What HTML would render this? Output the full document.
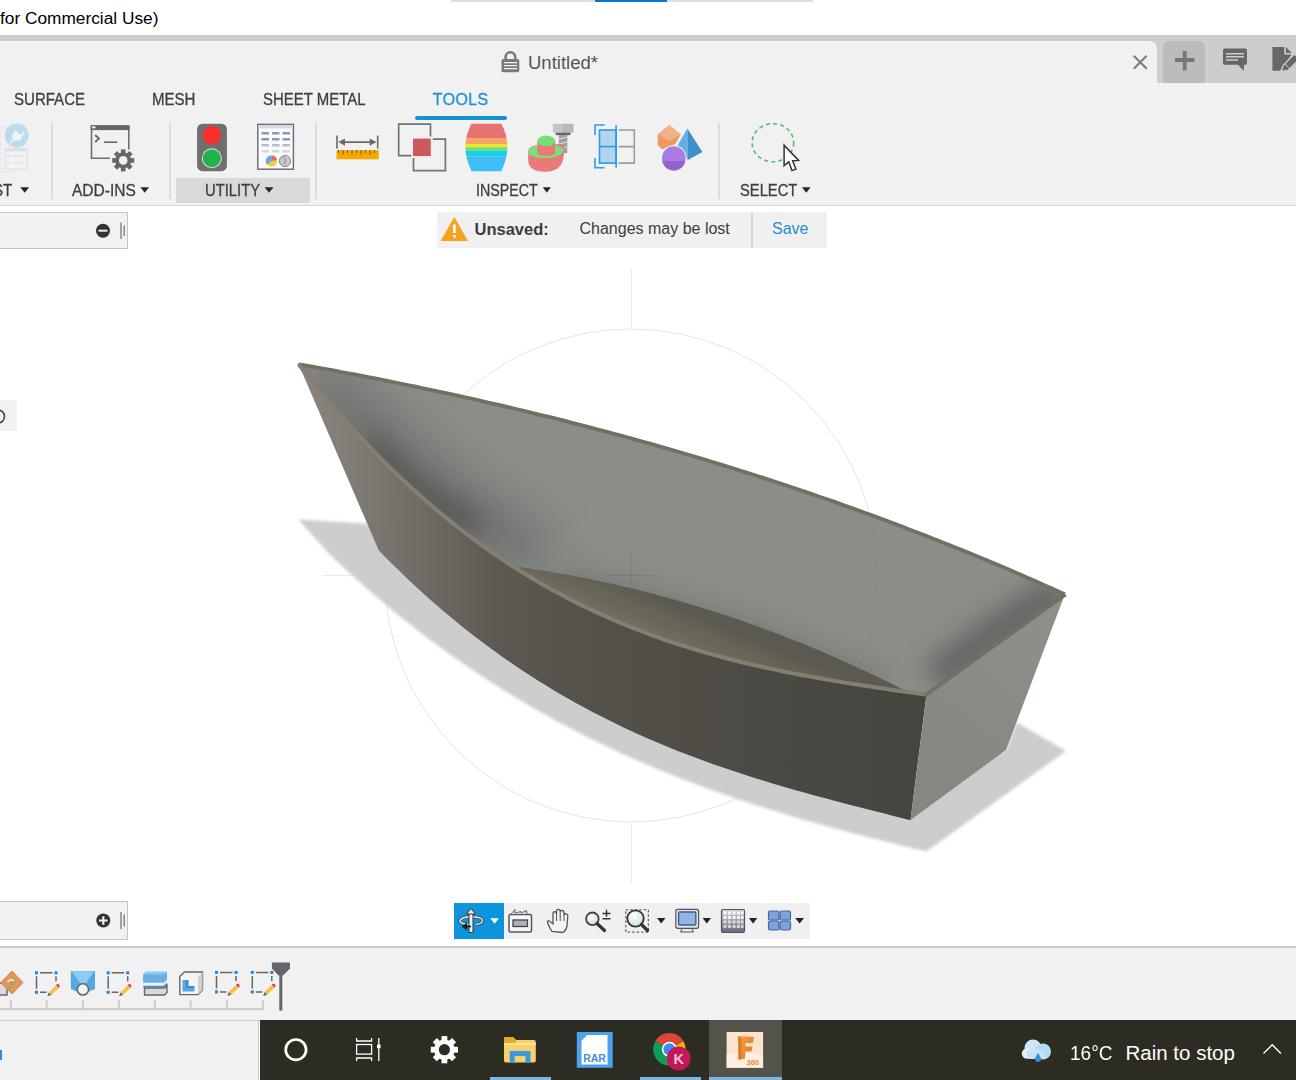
<!DOCTYPE html>
<html><head><meta charset="utf-8">
<style>
*{margin:0;padding:0;box-sizing:border-box}
html,body{width:1296px;height:1080px;overflow:hidden;background:#fff;font-family:"Liberation Sans",sans-serif}
body{position:relative}
.a{position:absolute}
.t{white-space:nowrap;line-height:1}
.tab{font-size:16px;color:#3f3f3f;transform-origin:0 0;-webkit-text-stroke:0.3px currentColor}
.grp{font-size:16px;color:#3f3f3f;transform-origin:0 0;-webkit-text-stroke:0.3px currentColor}
.sep{position:absolute;width:2px;background:#dcdcdc;top:123px;height:76px}
.tri{display:inline-block;width:0;height:0;border-left:4.5px solid transparent;border-right:4.5px solid transparent;border-top:5.5px solid #222;vertical-align:middle;margin-left:5px;position:relative;top:-3px}
</style></head><body>
<!-- top white bar -->
<div class="a" style="left:451px;top:0;width:362px;height:2px;background:#dedede"></div>
<div class="a" style="left:595px;top:0;width:72px;height:2px;background:#0a74d2"></div>
<div class="a t" style="left:0;top:10.1px;font-size:17.3px;color:#000">for Commercial Use)</div>

<!-- tab bar -->
<div class="a" style="left:0;top:35px;width:1296px;height:48px;background:#cdcdcd"></div>
<div class="a" style="left:-10px;top:41px;width:1167px;height:50px;background:#f1f1f1;border-top-right-radius:7px"></div>
<div class="a" style="left:1163px;top:41px;width:42px;height:42px;background:#bcbcbc;border-top-left-radius:6px;border-top-right-radius:6px"></div>
<div class="a" style="left:0;top:83px;width:1296px;height:122px;background:#f1f1f1"></div>
<div class="a" style="left:0;top:205px;width:1296px;height:1px;background:#d6d6d6"></div>


<!-- bottom bg -->
<div class="a" style="left:0;top:946px;width:1296px;height:2px;background:#c9c9c9"></div>
<div class="a" style="left:0;top:948px;width:1296px;height:72px;background:#f1f1f1"></div>
<div class="a" style="left:0;top:1020px;width:1296px;height:1px;background:#cfcfcf"></div>
<div class="a" style="left:0;top:1021px;width:259px;height:59px;background:#f1f1f1;border-right:1px solid #c9c9c9"></div>
<div class="a" style="left:260px;top:1020px;width:1036px;height:60px;background:#2d2c23"></div>
<!-- ribbon text -->
<div class="a t tab" style="left:14px;top:91.7px;transform:scaleX(0.94)">SURFACE</div>
<div class="a t tab" style="left:151.8px;top:91.7px;transform:scaleX(0.94)">MESH</div>
<div class="a t tab" style="left:262.8px;top:91.7px;transform:scaleX(0.935)">SHEET METAL</div>
<div class="a t tab" style="left:432.5px;top:91.7px;color:#1993d6;letter-spacing:0.4px">TOOLS</div>
<div class="a" style="left:415px;top:115.5px;width:92px;height:4px;border-radius:2px;background:#1193d6"></div>
<div class="a" style="left:176px;top:178px;width:134px;height:25px;background:#d9d9d9"></div>
<div class="a t grp" style="left:-7px;top:183.3px;transform:scaleX(0.94)">ST</div>
<div class="a t grp" style="left:72px;top:183.3px;transform:scaleX(0.97)">ADD-INS</div>
<div class="a t grp" style="left:204.6px;top:183.3px;transform:scaleX(0.926)">UTILITY</div>
<div class="a t grp" style="left:475.6px;top:183.3px;transform:scaleX(0.89)">INSPECT</div>
<div class="a t grp" style="left:739.8px;top:183.3px;transform:scaleX(0.92)">SELECT</div>
<svg class="a" style="left:0;top:180px" width="820" height="20" viewBox="0 180 820 20">
 <path d="M20.3 187.3 H29.1 L24.7 192.8 Z M140.4 187.3 H149 L144.7 192.8 Z M264.6 187.3 H273.5 L269 192.8 Z M542.8 187.3 H550.8 L546.8 192.8 Z M802 187.3 H810.6 L806.3 192.8 Z" fill="#262626"/>
</svg>
<div class="sep" style="left:50.5px"></div>
<div class="sep" style="left:169px"></div>
<div class="sep" style="left:314.5px"></div>
<div class="sep" style="left:718px"></div>
<!-- title -->
<div class="a t" style="left:528px;top:54px;font-size:18.5px;color:#555">Untitled*</div>


<!-- ribbon icons -->
<svg class="a" style="left:0;top:0" width="1296" height="210" viewBox="0 0 1296 210">
 <!-- close X, plus, comment, doc -->
 <g stroke="#7a7a7a" stroke-width="2" stroke-linecap="square">
  <path d="M1134.5 56.5 L1146 68 M1146 56.5 L1134.5 68"/>
 </g>
 <path d="M1175 60 H1194.5 M1184.7 51 V70.5" stroke="#777" stroke-width="3.8"/>
  <path d="M1223 50 Q1223 48.5 1224.5 48.5 H1245.5 Q1247 48.5 1247 50 V63.3 Q1247 64.8 1245.5 64.8 H1244 L1243.8 71 L1238 64.8 H1224.5 Q1223 64.8 1223 63.3 Z" fill="#676767"/>
 <path d="M1226 53.7 H1244 M1226 56.8 H1244 M1226 60 H1238" stroke="#cdcdcd" stroke-width="1.5"/>
 <path d="M1272.4 47 H1284.3 V54.6 H1291.7 L1280 70.8 H1272.4 Z" fill="#676767"/>
 <path d="M1286 47 L1291.7 53 H1286 Z" fill="#676767"/>
 <path d="M1281.2 71.5 L1283 65.5 L1294.5 54 L1299.5 59 L1288 70.5 Z" fill="#676767" stroke="#cdcdcd" stroke-width="1.3"/>
 <path d="M1285 64 L1290 69" stroke="#cdcdcd" stroke-width="1"/>
 <!-- lock -->
 <path d="M505.6 59.5 V57 A4.8 4.8 0 0 1 515.2 57 V59.5" fill="none" stroke="#7a7a7a" stroke-width="2.6"/>
 <rect x="501.5" y="58.9" width="17.8" height="13.4" rx="1.8" fill="#7a7a7a"/>
 <path d="M504 62.6 H517 M504 65.6 H517 M504 68.6 H517" stroke="#f1f1f1" stroke-width="1.1"/>

 <!-- plug (faded) -->
 <g opacity="0.9">
  <rect x="0" y="127" width="9" height="45" fill="none" stroke="#e2e2e2" stroke-width="1"/>
  <rect x="5.5" y="148.5" width="21.5" height="20.5" fill="#f4f4f4" stroke="#dedede" stroke-width="1"/>
  <rect x="5.5" y="148.5" width="21.5" height="3" fill="#e0e0e0"/>
  <path d="M12 156 H24 M12 163 H24" stroke="#cfe0ee" stroke-width="1"/>
  <rect x="7" y="154.5" width="2.5" height="2.5" fill="#cfe0ee"/><rect x="7" y="161.5" width="2.5" height="2.5" fill="#ddd"/>
  <circle cx="16.7" cy="135.5" r="11.9" fill="#b3daee"/>
  <path d="M9 143 L12.5 139.5 Q10.5 134 15.5 130.5 L20 135 L23.5 131.5 L25 133 L21.5 136.5 L22.5 137.5 Q19 142.5 13.5 140.5 L10 144 Z" fill="#f0f4f6"/>
 </g>
 <!-- add-ins -->
 <g>
  <path d="M110 158.3 H91.5 V126 H128.8 V149.5" fill="none" stroke="#707070" stroke-width="1.6"/>
  <rect x="90.7" y="125.3" width="38.9" height="4.8" fill="#666"/>
  <rect x="92" y="126.3" width="3.5" height="2" fill="#eee"/>
  <path d="M95.2 135 L99 138.5 L95.2 142" fill="none" stroke="#666" stroke-width="1.8"/>
  <path d="M104.2 142.2 H117.2" stroke="#666" stroke-width="1.6"/>
  <g transform="translate(123.2 160.4)" fill="#666">
   <circle r="8" />
   <g id="tooth"><rect x="-2.3" y="-11" width="4.6" height="5"/></g>
   <use href="#tooth" transform="rotate(45)"/><use href="#tooth" transform="rotate(90)"/><use href="#tooth" transform="rotate(135)"/>
   <use href="#tooth" transform="rotate(180)"/><use href="#tooth" transform="rotate(225)"/><use href="#tooth" transform="rotate(270)"/><use href="#tooth" transform="rotate(315)"/>
   <circle r="4.3" fill="#f1f1f1"/>
  </g>
 </g>
 <!-- traffic light -->
 <rect x="197.1" y="123.7" width="29.8" height="47.5" rx="5.5" fill="#6f6f6f"/>
 <circle cx="211.8" cy="135.3" r="9.2" fill="#fb2d2d"/>
 <circle cx="211.8" cy="158.2" r="10" fill="#f1f1f1" opacity="0.9"/>
 <circle cx="211.8" cy="158.2" r="9" fill="#22b14c"/>
 <!-- table -->
 <rect x="257.8" y="124.4" width="35.6" height="44.8" fill="#fafbfd" stroke="#707070" stroke-width="1.5"/>
 <rect x="258.5" y="125.2" width="34.2" height="3.2" fill="#d3d9e6"/>
 <g fill="#8b99b8">
  <rect x="261.5" y="132" width="7.5" height="2.5"/><rect x="272" y="132" width="7.5" height="2.5"/><rect x="282.5" y="132" width="7.5" height="2.5"/>
  <rect x="261.5" y="138" width="7.5" height="2.5"/><rect x="272" y="138" width="7.5" height="2.5"/><rect x="282.5" y="138" width="7.5" height="2.5"/>
 </g>
 <g fill="#b3bdd0">
  <rect x="261.5" y="144" width="7.5" height="2.5"/><rect x="272" y="144" width="7.5" height="2.5"/><rect x="282.5" y="144" width="7.5" height="2.5"/>
 </g>
 <g fill="#d3d8e2">
  <rect x="261.5" y="150" width="7.5" height="2.5"/><rect x="272" y="150" width="7.5" height="2.5"/><rect x="282.5" y="150" width="7.5" height="2.5"/>
 </g>
 <circle cx="271.5" cy="161" r="5.6" fill="#f0d040"/>
 <path d="M271.5 161 V155.4 A5.6 5.6 0 0 1 277 160 Z" fill="#e06a6a"/>
 <path d="M271.5 161 L267 164.5 A5.6 5.6 0 0 1 271.5 155.4 Z" fill="#6aa8e0"/>
 <circle cx="285" cy="161" r="5.6" fill="#c8c8c8" stroke="#8a8a8a" stroke-width="1"/>
 <path d="M283 157 L286 160 L284 164" stroke="#888" fill="none" stroke-width="1"/>

 <!-- measure -->
 <path d="M337 135.6 V148.6 M377.7 135.6 V148.6 M340 142.1 H375" stroke="#6a6a6a" stroke-width="1.6"/>
 <path d="M338.2 142.1 L345 138.5 V145.7 Z M376.5 142.1 L369.7 138.5 V145.7 Z" fill="#6a6a6a"/>
 <rect x="336.5" y="150.1" width="42.2" height="9.2" fill="#f7a800"/>
 <path d="M343 150.1 V154.6 M352 150.1 V154.6 M361 150.1 V154.6 M370 150.1 V154.6 M338.5 150.1 V153 M347.5 150.1 V153 M356.5 150.1 V153 M365.5 150.1 V153 M374.5 150.1 V153" stroke="#6f5a20" stroke-width="1"/>
 <!-- interference -->
 <path d="M430.5 136.6 V124.2 H398.7 V155.6 H411.3" fill="none" stroke="#737373" stroke-width="1.7"/>
 <path d="M413.5 158.1 V170.7 H445.4 V139.1 H432.8" fill="none" stroke="#737373" stroke-width="1.7"/>
 <rect x="413" y="138.6" width="17.8" height="17.5" fill="#cc5a5a"/>
 <!-- curvature barrel -->
 <defs>
  <clipPath id="barrel"><path d="M471.5 123.8 H501.3 Q513.5 146.1 501.3 171.2 H471.5 Q459.3 146.1 471.5 123.8 Z"/></clipPath>
 </defs>
 <g clip-path="url(#barrel)">
  <rect x="455" y="123" width="60" height="15.3" fill="#e87272"/>
  <rect x="455" y="138.3" width="60" height="5.8" fill="#f8a264"/>
  <rect x="455" y="144.1" width="60" height="3.2" fill="#ece422"/>
  <rect x="455" y="147.3" width="60" height="3.3" fill="#72de72"/>
  <rect x="455" y="150.6" width="60" height="6" fill="#16d0e0"/>
  <rect x="455" y="156.6" width="60" height="16" fill="#40bdf8"/>
 </g>
 <!-- draft analysis -->
 <rect x="552.8" y="123.8" width="20.6" height="8.6" fill="#c6c6c6"/>
 <rect x="563" y="123.8" width="10.4" height="8.6" fill="#b8b8b8"/>
 <rect x="555.6" y="132.6" width="14.8" height="2.5" fill="#666"/>
 <rect x="558.8" y="135" width="8.5" height="18.1" fill="#a0a0a0"/>
 <path d="M559 139 L567 137 M559 144 L567 142 M559 149 L567 147" stroke="#dcdcdc" stroke-width="1.2"/>
 <path d="M528.2 152 Q528.2 145 541 145 L560 144 Q566 146 564.3 152 L563 160 Q560 171.7 545 171.7 Q528.2 171.7 528.2 160 Z" fill="#e87a7a"/>
 <path d="M528.2 152 Q530 145 541 145.6 L556 145 Q562 147 564.3 150 Q560 158 546 158 Q530 158 528.2 152 Z" fill="#7ae07a"/>
 <path d="M537.2 141 V152 Q537.2 156.1 546.2 156.1 Q555.3 156.1 555.3 152 V141 Z" fill="#e87a7a"/>
 <ellipse cx="546.2" cy="141" rx="9" ry="5.4" fill="#74e074"/>
 <!-- section analysis -->
 <rect x="599.5" y="130" width="16.6" height="33.1" fill="#b3d4ee" stroke="#2d9be8" stroke-width="1.6"/>
 <path d="M599.5 146.6 H616" stroke="#2d9be8" stroke-width="1.6"/>
 <path d="M595 135 V125 H604.6 M595 158.1 V167.7 H604.6 M616.1 125 V167.7" fill="none" stroke="#2d9be8" stroke-width="1.6"/>
 <path d="M618.6 130 H634.3 V163.1 H618.6 M618.6 146.6 H634.3" fill="none" stroke="#9a9a9a" stroke-width="1.6"/>
 <!-- shapes -->
 <path d="M669.3 125 L680.8 134.6 L675.3 144.1 L662.2 149.6 L657.7 145.1 L657.7 134.6 Z" fill="#ec9a64"/>
 <path d="M669.3 125 L680.8 134.6 L669.3 141 L657.7 134.6 Z" fill="#f4b184"/>
 <path d="M687.3 128.5 L677.8 145.1 L687.8 160.1 Z" fill="#62b0e6"/>
 <path d="M687.3 128.5 L702.4 152.1 L687.8 160.1 Z" fill="#3f8fcc"/>
 <circle cx="673.8" cy="158.1" r="12.8" fill="#f1f1f1"/>
 <circle cx="673.8" cy="158.1" r="11.8" fill="#a97de4"/>
 <path d="M662.2 161 A11.8 11.8 0 0 0 685.4 161 Z" fill="#9362cc"/>
 <!-- select -->
 <ellipse cx="772.9" cy="142.7" rx="20.8" ry="19.1" fill="none" stroke="#4cc36a" stroke-width="1.6" stroke-dasharray="4 3.2"/>
 <path d="M784.1 145.2 V165.6 L788.8 161.8 L791.9 170.6 L795.9 169.1 L792.6 160.7 L798.6 160.4 Z" fill="#fff" stroke="#333" stroke-width="1.5" stroke-linejoin="miter"/>
</svg>


<!-- viewport -->
<svg class="a" style="left:0;top:206px" width="1296" height="740" viewBox="0 206 1296 740">
 <defs>
  <filter id="blur1" x="-5%" y="-5%" width="110%" height="110%"><feGaussianBlur stdDeviation="1.5"/></filter>
  <filter id="blurB" x="-50%" y="-50%" width="200%" height="200%"><feGaussianBlur stdDeviation="22"/></filter>
  <filter id="blurC" x="-50%" y="-50%" width="200%" height="200%"><feGaussianBlur stdDeviation="12"/></filter>
  <clipPath id="cInner"><path d="M298.5 364.0 L302.0 364.3 L308.0 365.3 L314.0 366.4 L320.0 367.5 L326.0 368.6 L332.0 369.7 L338.0 370.8 L344.0 372.0 L350.0 373.1 L356.0 374.2 L362.0 375.4 L368.0 376.6 L374.0 377.7 L380.0 378.9 L386.0 380.1 L392.0 381.3 L398.0 382.5 L404.0 383.8 L410.0 385.0 L416.0 386.2 L422.0 387.5 L428.0 388.8 L434.0 390.0 L440.0 391.3 L446.0 392.6 L452.0 393.9 L458.0 395.2 L464.0 396.6 L470.0 397.9 L476.0 399.2 L482.0 400.6 L488.0 402.0 L494.0 403.3 L500.0 404.7 L506.0 406.1 L512.0 407.5 L518.0 409.0 L524.0 410.4 L530.0 411.8 L536.0 413.3 L542.0 414.8 L548.0 416.2 L554.0 417.7 L560.0 419.2 L566.0 420.7 L572.0 422.3 L578.0 423.8 L584.0 425.4 L590.0 426.9 L596.0 428.5 L602.0 430.1 L608.0 431.7 L614.0 433.3 L620.0 434.9 L626.0 436.5 L632.0 438.2 L638.0 439.8 L644.0 441.5 L650.0 443.2 L656.0 444.9 L662.0 446.6 L668.0 448.3 L674.0 450.0 L680.0 451.8 L686.0 453.5 L692.0 455.3 L698.0 457.1 L704.0 458.9 L710.0 460.7 L716.0 462.5 L722.0 464.4 L728.0 466.2 L734.0 468.1 L740.0 470.0 L746.0 471.9 L752.0 473.8 L758.0 475.7 L764.0 477.6 L770.0 479.6 L776.0 481.5 L782.0 483.5 L788.0 485.5 L794.0 487.5 L800.0 489.5 L806.0 491.6 L812.0 493.6 L818.0 495.7 L824.0 497.7 L830.0 499.8 L836.0 501.9 L842.0 504.1 L848.0 506.2 L854.0 508.3 L860.0 510.5 L866.0 512.7 L872.0 514.9 L878.0 517.1 L884.0 519.3 L890.0 521.6 L896.0 523.8 L902.0 526.1 L908.0 528.4 L914.0 530.7 L920.0 533.0 L926.0 535.3 L932.0 537.7 L938.0 540.0 L944.0 542.4 L950.0 544.8 L956.0 547.2 L962.0 549.6 L968.0 552.1 L974.0 554.5 L980.0 557.0 L986.0 559.5 L992.0 562.0 L998.0 564.5 L1004.0 567.1 L1010.0 569.6 L1016.0 572.2 L1022.0 574.8 L1028.0 577.4 L1034.0 580.0 L1040.0 582.7 L1046.0 585.4 L1052.0 588.0 L1058.0 590.7 L1064.0 593.4 L1065.0 593.9 L926.5 695.0 L926.5 694.7 L926.0 694.6 L920.0 693.8 L914.0 692.9 L908.0 692.1 L902.0 691.2 L896.0 690.4 L890.0 689.5 L884.0 688.6 L878.0 687.7 L872.0 686.8 L866.0 685.9 L860.0 685.0 L854.0 684.0 L848.0 683.1 L842.0 682.1 L836.0 681.1 L830.0 680.1 L824.0 679.1 L818.0 678.0 L812.0 676.9 L806.0 675.8 L800.0 674.7 L794.0 673.6 L788.0 672.4 L782.0 671.2 L776.0 669.9 L770.0 668.6 L764.0 667.3 L758.0 666.0 L752.0 664.6 L746.0 663.2 L740.0 661.7 L734.0 660.2 L728.0 658.7 L722.0 657.1 L716.0 655.5 L710.0 653.8 L704.0 652.1 L698.0 650.4 L692.0 648.6 L686.0 646.7 L680.0 644.8 L674.0 642.8 L668.0 640.8 L662.0 638.8 L656.0 636.6 L650.0 634.5 L644.0 632.2 L638.0 629.9 L632.0 627.6 L626.0 625.2 L620.0 622.7 L614.0 620.1 L608.0 617.5 L602.0 614.8 L596.0 612.1 L590.0 609.3 L584.0 606.4 L578.0 603.4 L572.0 600.4 L566.0 597.3 L560.0 594.1 L554.0 590.9 L548.0 587.5 L542.0 584.1 L536.0 580.6 L530.0 577.0 L524.0 573.4 L518.0 569.6 L512.0 565.8 L506.0 561.9 L500.0 557.9 L494.0 553.8 L488.0 549.6 L482.0 545.3 L476.0 541.0 L470.0 536.5 L464.0 532.0 L458.0 527.3 L452.0 522.6 L446.0 517.7 L440.0 512.8 L434.0 507.7 L428.0 502.6 L422.0 497.3 L416.0 491.9 L410.0 486.5 L404.0 480.9 L398.0 475.2 L392.0 469.4 L386.0 463.5 L380.0 457.5 L374.0 451.4 L368.0 445.1 L362.0 438.7 L356.0 432.3 L350.0 425.7 L344.0 418.9 L338.0 412.1 L332.0 405.1 L326.0 398.0 L320.0 390.8 L314.0 383.5 L308.0 376.0 L302.0 368.4 L298.5 364.0 Z"/></clipPath>
  <linearGradient id="gFront" x1="300" y1="0" x2="920" y2="0" gradientUnits="userSpaceOnUse">
   <stop offset="0" stop-color="#8a867e"/>
   <stop offset="0.08" stop-color="#817d76"/>
   <stop offset="0.19" stop-color="#716d66"/>
   <stop offset="0.32" stop-color="#5d5952"/>
   <stop offset="0.48" stop-color="#54514a"/>
   <stop offset="0.89" stop-color="#484641"/>
   <stop offset="1" stop-color="#46443f"/>
  </linearGradient>
  <linearGradient id="gStern" x1="930" y1="760" x2="1060" y2="600" gradientUnits="userSpaceOnUse">
   <stop offset="0" stop-color="#868781"/>
   <stop offset="1" stop-color="#8f908a"/>
  </linearGradient>
  <linearGradient id="gFloor" x1="660" y1="598" x2="640" y2="645" gradientUnits="userSpaceOnUse">
   <stop offset="0" stop-color="#5c5950"/>
   <stop offset="0.4" stop-color="#696659"/>
   <stop offset="0.75" stop-color="#737063"/>
   <stop offset="1" stop-color="#737064"/>
  </linearGradient>
 </defs>
 <g stroke="#ebebeb" stroke-width="1" fill="none">
  <circle cx="631" cy="575.5" r="246.5"/>
  <path d="M631.5 268 V329 M631.5 822 V884 M322 575.5 H385 M877 575.5 H940"/>
 </g>
 <path filter="url(#blur1)" fill="#cdcdcd" d="M298.3 519.4 L331.7 556.4 L337.7 562.1 L343.7 567.6 L349.7 573.1 L355.7 578.6 L361.7 583.9 L367.7 589.2 L373.7 594.4 L379.7 599.5 L385.7 604.5 L391.7 609.5 L397.7 614.4 L403.7 619.3 L409.7 624.0 L415.7 628.7 L421.7 633.4 L427.7 637.9 L433.7 642.4 L439.7 646.9 L445.7 651.2 L451.7 655.5 L457.7 659.8 L463.7 663.9 L469.7 668.0 L475.7 672.1 L481.7 676.1 L487.7 680.0 L493.7 683.9 L499.7 687.7 L505.7 691.4 L511.7 695.1 L517.7 698.8 L523.7 702.3 L529.7 705.9 L535.7 709.3 L541.7 712.7 L547.7 716.1 L553.7 719.4 L559.7 722.7 L565.7 725.9 L571.7 729.0 L577.7 732.1 L583.7 735.2 L589.7 738.2 L595.7 741.1 L601.7 744.1 L607.7 746.9 L613.7 749.7 L619.7 752.5 L625.7 755.3 L631.7 757.9 L637.7 760.6 L643.7 763.2 L649.7 765.8 L655.7 768.3 L661.7 770.8 L667.7 773.2 L673.7 775.6 L679.7 778.0 L685.7 780.3 L691.7 782.6 L697.7 784.8 L703.7 787.1 L709.7 789.3 L715.7 791.4 L721.7 793.5 L727.7 795.6 L733.7 797.7 L739.7 799.7 L745.7 801.7 L751.7 803.7 L757.7 805.6 L763.7 807.5 L769.7 809.4 L775.7 811.3 L781.7 813.1 L787.7 814.9 L793.7 816.7 L799.7 818.5 L805.7 820.2 L811.7 821.9 L817.7 823.6 L823.7 825.3 L829.7 826.9 L835.7 828.6 L841.7 830.2 L847.7 831.8 L853.7 833.4 L859.7 834.9 L865.7 836.5 L871.7 838.0 L877.7 839.5 L883.7 841.1 L889.7 842.5 L895.7 844.0 L901.7 845.5 L907.7 847.0 L913.7 848.4 L919.7 849.8 L925.7 851.3 L926.3 851.4 L1066 751 L1016.8 722.6 L1006 750 L910 800 L600 650 L372 524 Z"/>
 <path fill="#8a8d88" d="M298.5 364.0 L302.0 364.3 L308.0 365.3 L314.0 366.4 L320.0 367.5 L326.0 368.6 L332.0 369.7 L338.0 370.8 L344.0 372.0 L350.0 373.1 L356.0 374.2 L362.0 375.4 L368.0 376.6 L374.0 377.7 L380.0 378.9 L386.0 380.1 L392.0 381.3 L398.0 382.5 L404.0 383.8 L410.0 385.0 L416.0 386.2 L422.0 387.5 L428.0 388.8 L434.0 390.0 L440.0 391.3 L446.0 392.6 L452.0 393.9 L458.0 395.2 L464.0 396.6 L470.0 397.9 L476.0 399.2 L482.0 400.6 L488.0 402.0 L494.0 403.3 L500.0 404.7 L506.0 406.1 L512.0 407.5 L518.0 409.0 L524.0 410.4 L530.0 411.8 L536.0 413.3 L542.0 414.8 L548.0 416.2 L554.0 417.7 L560.0 419.2 L566.0 420.7 L572.0 422.3 L578.0 423.8 L584.0 425.4 L590.0 426.9 L596.0 428.5 L602.0 430.1 L608.0 431.7 L614.0 433.3 L620.0 434.9 L626.0 436.5 L632.0 438.2 L638.0 439.8 L644.0 441.5 L650.0 443.2 L656.0 444.9 L662.0 446.6 L668.0 448.3 L674.0 450.0 L680.0 451.8 L686.0 453.5 L692.0 455.3 L698.0 457.1 L704.0 458.9 L710.0 460.7 L716.0 462.5 L722.0 464.4 L728.0 466.2 L734.0 468.1 L740.0 470.0 L746.0 471.9 L752.0 473.8 L758.0 475.7 L764.0 477.6 L770.0 479.6 L776.0 481.5 L782.0 483.5 L788.0 485.5 L794.0 487.5 L800.0 489.5 L806.0 491.6 L812.0 493.6 L818.0 495.7 L824.0 497.7 L830.0 499.8 L836.0 501.9 L842.0 504.1 L848.0 506.2 L854.0 508.3 L860.0 510.5 L866.0 512.7 L872.0 514.9 L878.0 517.1 L884.0 519.3 L890.0 521.6 L896.0 523.8 L902.0 526.1 L908.0 528.4 L914.0 530.7 L920.0 533.0 L926.0 535.3 L932.0 537.7 L938.0 540.0 L944.0 542.4 L950.0 544.8 L956.0 547.2 L962.0 549.6 L968.0 552.1 L974.0 554.5 L980.0 557.0 L986.0 559.5 L992.0 562.0 L998.0 564.5 L1004.0 567.1 L1010.0 569.6 L1016.0 572.2 L1022.0 574.8 L1028.0 577.4 L1034.0 580.0 L1040.0 582.7 L1046.0 585.4 L1052.0 588.0 L1058.0 590.7 L1064.0 593.4 L1065.0 593.9 L926.5 695.0 L926.5 694.7 L926.0 694.6 L920.0 693.8 L914.0 692.9 L908.0 692.1 L902.0 691.2 L896.0 690.4 L890.0 689.5 L884.0 688.6 L878.0 687.7 L872.0 686.8 L866.0 685.9 L860.0 685.0 L854.0 684.0 L848.0 683.1 L842.0 682.1 L836.0 681.1 L830.0 680.1 L824.0 679.1 L818.0 678.0 L812.0 676.9 L806.0 675.8 L800.0 674.7 L794.0 673.6 L788.0 672.4 L782.0 671.2 L776.0 669.9 L770.0 668.6 L764.0 667.3 L758.0 666.0 L752.0 664.6 L746.0 663.2 L740.0 661.7 L734.0 660.2 L728.0 658.7 L722.0 657.1 L716.0 655.5 L710.0 653.8 L704.0 652.1 L698.0 650.4 L692.0 648.6 L686.0 646.7 L680.0 644.8 L674.0 642.8 L668.0 640.8 L662.0 638.8 L656.0 636.6 L650.0 634.5 L644.0 632.2 L638.0 629.9 L632.0 627.6 L626.0 625.2 L620.0 622.7 L614.0 620.1 L608.0 617.5 L602.0 614.8 L596.0 612.1 L590.0 609.3 L584.0 606.4 L578.0 603.4 L572.0 600.4 L566.0 597.3 L560.0 594.1 L554.0 590.9 L548.0 587.5 L542.0 584.1 L536.0 580.6 L530.0 577.0 L524.0 573.4 L518.0 569.6 L512.0 565.8 L506.0 561.9 L500.0 557.9 L494.0 553.8 L488.0 549.6 L482.0 545.3 L476.0 541.0 L470.0 536.5 L464.0 532.0 L458.0 527.3 L452.0 522.6 L446.0 517.7 L440.0 512.8 L434.0 507.7 L428.0 502.6 L422.0 497.3 L416.0 491.9 L410.0 486.5 L404.0 480.9 L398.0 475.2 L392.0 469.4 L386.0 463.5 L380.0 457.5 L374.0 451.4 L368.0 445.1 L362.0 438.7 L356.0 432.3 L350.0 425.7 L344.0 418.9 L338.0 412.1 L332.0 405.1 L326.0 398.0 L320.0 390.8 L314.0 383.5 L308.0 376.0 L302.0 368.4 L298.5 364.0 Z"/>
 <g clip-path="url(#cInner)">
  <path d="M310.0 380.0 C321.7 390.0 356.7 420.0 380.0 440.0 C403.3 460.0 423.3 480.0 450.0 500.0 C476.7 520.0 525.0 550.0 540.0 560.0 " fill="none" stroke="#666966" stroke-width="56" opacity="0.7" filter="url(#blurB)"/>
  <path d="M365.0 440.0 C374.2 448.7 401.2 477.0 420.0 492.0 C438.8 507.0 468.3 523.7 478.0 530.0 " fill="none" stroke="#4f5350" stroke-width="26" opacity="0.85" filter="url(#blurC)"/>
  <path d="M560.0 582.0 C575.0 585.8 616.7 595.3 650.0 605.0 C683.3 614.7 721.7 625.8 760.0 640.0 C798.3 654.2 860.0 681.7 880.0 690.0 " fill="none" stroke="#626562" stroke-width="30" opacity="0.45" filter="url(#blurC)"/>
  <path d="M1062 590 L1000 630 L935 678" fill="none" stroke="#555855" stroke-width="34" opacity="0.75" filter="url(#blurC)"/>
 </g>
 <path fill="url(#gFloor)" d="M512.0 565.9 L518.0 566.7 L524.0 567.6 L530.0 568.5 L536.0 569.4 L542.0 570.4 L548.0 571.3 L554.0 572.4 L560.0 573.4 L566.0 574.5 L572.0 575.6 L578.0 576.8 L584.0 577.9 L590.0 579.1 L596.0 580.4 L602.0 581.7 L608.0 583.0 L614.0 584.3 L620.0 585.7 L626.0 587.1 L632.0 588.5 L638.0 590.0 L644.0 591.5 L650.0 593.0 L656.0 594.6 L662.0 596.2 L668.0 597.9 L674.0 599.5 L680.0 601.2 L686.0 603.0 L692.0 604.8 L698.0 606.6 L704.0 608.4 L710.0 610.3 L716.0 612.2 L722.0 614.2 L728.0 616.1 L734.0 618.1 L740.0 620.2 L746.0 622.3 L752.0 624.4 L758.0 626.6 L764.0 628.8 L770.0 631.0 L776.0 633.2 L782.0 635.5 L788.0 637.9 L794.0 640.2 L800.0 642.6 L806.0 645.1 L812.0 647.6 L818.0 650.1 L824.0 652.6 L830.0 655.2 L836.0 657.8 L842.0 660.5 L848.0 663.2 L854.0 665.9 L860.0 668.7 L866.0 671.5 L872.0 674.3 L878.0 677.2 L884.0 680.1 L890.0 683.1 L896.0 686.0 L902.0 689.1 L905.0 690.6 L926.5 695.0 L926.5 694.7 L926.0 694.6 L920.0 693.8 L914.0 692.9 L908.0 692.1 L902.0 691.2 L896.0 690.4 L890.0 689.5 L884.0 688.6 L878.0 687.7 L872.0 686.8 L866.0 685.9 L860.0 685.0 L854.0 684.0 L848.0 683.1 L842.0 682.1 L836.0 681.1 L830.0 680.1 L824.0 679.1 L818.0 678.0 L812.0 676.9 L806.0 675.8 L800.0 674.7 L794.0 673.6 L788.0 672.4 L782.0 671.2 L776.0 669.9 L770.0 668.6 L764.0 667.3 L758.0 666.0 L752.0 664.6 L746.0 663.2 L740.0 661.7 L734.0 660.2 L728.0 658.7 L722.0 657.1 L716.0 655.5 L710.0 653.8 L704.0 652.1 L698.0 650.4 L692.0 648.6 L686.0 646.7 L680.0 644.8 L674.0 642.8 L668.0 640.8 L662.0 638.8 L656.0 636.6 L650.0 634.5 L644.0 632.2 L638.0 629.9 L632.0 627.6 L626.0 625.2 L620.0 622.7 L614.0 620.1 L608.0 617.5 L602.0 614.8 L596.0 612.1 L590.0 609.3 L584.0 606.4 L578.0 603.4 L572.0 600.4 L566.0 597.3 L560.0 594.1 L554.0 590.9 L548.0 587.5 L542.0 584.1 L536.0 580.6 L530.0 577.0 L524.0 573.4 L518.0 569.6 L512.0 565.8 Z"/>
 <path fill="url(#gFront)" d="M298.5 364.0 L302.0 368.4 L308.0 376.0 L314.0 383.5 L320.0 390.8 L326.0 398.0 L332.0 405.1 L338.0 412.1 L344.0 418.9 L350.0 425.7 L356.0 432.3 L362.0 438.7 L368.0 445.1 L374.0 451.4 L380.0 457.5 L386.0 463.5 L392.0 469.4 L398.0 475.2 L404.0 480.9 L410.0 486.5 L416.0 491.9 L422.0 497.3 L428.0 502.6 L434.0 507.7 L440.0 512.8 L446.0 517.7 L452.0 522.6 L458.0 527.3 L464.0 532.0 L470.0 536.5 L476.0 541.0 L482.0 545.3 L488.0 549.6 L494.0 553.8 L500.0 557.9 L506.0 561.9 L512.0 565.8 L518.0 569.6 L524.0 573.4 L530.0 577.0 L536.0 580.6 L542.0 584.1 L548.0 587.5 L554.0 590.9 L560.0 594.1 L566.0 597.3 L572.0 600.4 L578.0 603.4 L584.0 606.4 L590.0 609.3 L596.0 612.1 L602.0 614.8 L608.0 617.5 L614.0 620.1 L620.0 622.7 L626.0 625.2 L632.0 627.6 L638.0 629.9 L644.0 632.2 L650.0 634.5 L656.0 636.6 L662.0 638.8 L668.0 640.8 L674.0 642.8 L680.0 644.8 L686.0 646.7 L692.0 648.6 L698.0 650.4 L704.0 652.1 L710.0 653.8 L716.0 655.5 L722.0 657.1 L728.0 658.7 L734.0 660.2 L740.0 661.7 L746.0 663.2 L752.0 664.6 L758.0 666.0 L764.0 667.3 L770.0 668.6 L776.0 669.9 L782.0 671.2 L788.0 672.4 L794.0 673.6 L800.0 674.7 L806.0 675.8 L812.0 676.9 L818.0 678.0 L824.0 679.1 L830.0 680.1 L836.0 681.1 L842.0 682.1 L848.0 683.1 L854.0 684.0 L860.0 685.0 L866.0 685.9 L872.0 686.8 L878.0 687.7 L884.0 688.6 L890.0 689.5 L896.0 690.4 L902.0 691.2 L908.0 692.1 L914.0 692.9 L920.0 693.8 L926.0 694.6 L926.5 694.7 L910.5 820.0 L910.5 820.2 L904.5 818.7 L898.5 817.2 L892.5 815.7 L886.5 814.1 L880.5 812.6 L874.5 811.1 L868.5 809.6 L862.5 808.1 L856.5 806.5 L850.5 805.0 L844.5 803.4 L838.5 801.8 L832.5 800.2 L826.5 798.6 L820.5 797.0 L814.5 795.4 L808.5 793.7 L802.5 792.1 L796.5 790.4 L790.5 788.7 L784.5 786.9 L778.5 785.2 L772.5 783.4 L766.5 781.6 L760.5 779.7 L754.5 777.9 L748.5 776.0 L742.5 774.0 L736.5 772.1 L730.5 770.1 L724.5 768.0 L718.5 766.0 L712.5 763.9 L706.5 761.7 L700.5 759.5 L694.5 757.3 L688.5 755.0 L682.5 752.7 L676.5 750.4 L670.5 748.0 L664.5 745.5 L658.5 743.0 L652.5 740.5 L646.5 737.9 L640.5 735.2 L634.5 732.5 L628.5 729.7 L622.5 726.9 L616.5 724.0 L610.5 721.1 L604.5 718.1 L598.5 715.1 L592.5 711.9 L586.5 708.8 L580.5 705.5 L574.5 702.2 L568.5 698.8 L562.5 695.4 L556.5 691.9 L550.5 688.3 L544.5 684.6 L538.5 680.9 L532.5 677.1 L526.5 673.2 L520.5 669.3 L514.5 665.2 L508.5 661.1 L502.5 656.9 L496.5 652.6 L490.5 648.3 L484.5 643.8 L478.5 639.3 L472.5 634.7 L466.5 630.0 L460.5 625.2 L454.5 620.3 L448.5 615.3 L442.5 610.3 L436.5 605.1 L430.5 599.9 L424.5 594.5 L418.5 589.1 L412.5 583.5 L406.5 577.9 L400.5 572.1 L394.5 566.3 L388.5 560.3 L382.5 554.3 L378.8 550.5 Z"/>
 <circle cx="631" cy="575.5" r="246.5" fill="none" stroke="#000" stroke-opacity="0.028" stroke-width="1"/>
 <path d="M631.5 551.5 V588 M606.5 575.5 H655.5" stroke="#000" stroke-opacity="0.07" stroke-width="1"/>
 <path d="M877 575.5 H940" stroke="#000" stroke-opacity="0.04" stroke-width="1"/>
 <path fill="url(#gStern)" d="M926.5 695 L1065 594 L1006 750 L910.5 820 Z"/>
 <path d="M298.5 364.5 L302.0 364.8 L308.0 365.8 L314.0 366.9 L320.0 368.0 L326.0 369.1 L332.0 370.2 L338.0 371.3 L344.0 372.5 L350.0 373.6 L356.0 374.7 L362.0 375.9 L368.0 377.1 L374.0 378.2 L380.0 379.4 L386.0 380.6 L392.0 381.8 L398.0 383.0 L404.0 384.3 L410.0 385.5 L416.0 386.7 L422.0 388.0 L428.0 389.3 L434.0 390.5 L440.0 391.8 L446.0 393.1 L452.0 394.4 L458.0 395.7 L464.0 397.1 L470.0 398.4 L476.0 399.7 L482.0 401.1 L488.0 402.5 L494.0 403.8 L500.0 405.2 L506.0 406.6 L512.0 408.0 L518.0 409.5 L524.0 410.9 L530.0 412.3 L536.0 413.8 L542.0 415.3 L548.0 416.7 L554.0 418.2 L560.0 419.7 L566.0 421.2 L572.0 422.8 L578.0 424.3 L584.0 425.9 L590.0 427.4 L596.0 429.0 L602.0 430.6 L608.0 432.2 L614.0 433.8 L620.0 435.4 L626.0 437.0 L632.0 438.7 L638.0 440.3 L644.0 442.0 L650.0 443.7 L656.0 445.4 L662.0 447.1 L668.0 448.8 L674.0 450.5 L680.0 452.3 L686.0 454.0 L692.0 455.8 L698.0 457.6 L704.0 459.4 L710.0 461.2 L716.0 463.0 L722.0 464.9 L728.0 466.7 L734.0 468.6 L740.0 470.5 L746.0 472.4 L752.0 474.3 L758.0 476.2 L764.0 478.1 L770.0 480.1 L776.0 482.0 L782.0 484.0 L788.0 486.0 L794.0 488.0 L800.0 490.0 L806.0 492.1 L812.0 494.1 L818.0 496.2 L824.0 498.2 L830.0 500.3 L836.0 502.4 L842.0 504.6 L848.0 506.7 L854.0 508.8 L860.0 511.0 L866.0 513.2 L872.0 515.4 L878.0 517.6 L884.0 519.8 L890.0 522.1 L896.0 524.3 L902.0 526.6 L908.0 528.9 L914.0 531.2 L920.0 533.5 L926.0 535.8 L932.0 538.2 L938.0 540.5 L944.0 542.9 L950.0 545.3 L956.0 547.7 L962.0 550.1 L968.0 552.6 L974.0 555.0 L980.0 557.5 L986.0 560.0 L992.0 562.5 L998.0 565.0 L1004.0 567.6 L1010.0 570.1 L1016.0 572.7 L1022.0 575.3 L1028.0 577.9 L1034.0 580.5 L1040.0 583.2 L1046.0 585.9 L1052.0 588.5 L1058.0 591.2 L1064.0 593.9 L1065.0 594.4 " fill="none" stroke="#737063" stroke-width="3.8"/>
 <path d="M298.5 364.0 L302.0 368.4 L308.0 376.0 L314.0 383.5 L320.0 390.8 L326.0 398.0 L332.0 405.1 L338.0 412.1 L344.0 418.9 L350.0 425.7 L356.0 432.3 L362.0 438.7 L368.0 445.1 L374.0 451.4 L380.0 457.5 L386.0 463.5 L392.0 469.4 L398.0 475.2 L404.0 480.9 L410.0 486.5 L416.0 491.9 L422.0 497.3 L428.0 502.6 L434.0 507.7 L440.0 512.8 L446.0 517.7 L452.0 522.6 L458.0 527.3 L464.0 532.0 L470.0 536.5 L476.0 541.0 L482.0 545.3 L488.0 549.6 L494.0 553.8 L500.0 557.9 L506.0 561.9 L512.0 565.8 L518.0 569.6 L524.0 573.4 L530.0 577.0 L536.0 580.6 L542.0 584.1 L548.0 587.5 L554.0 590.9 L560.0 594.1 L566.0 597.3 L572.0 600.4 L578.0 603.4 L584.0 606.4 L590.0 609.3 L596.0 612.1 L602.0 614.8 L608.0 617.5 L614.0 620.1 L620.0 622.7 L626.0 625.2 L632.0 627.6 L638.0 629.9 L644.0 632.2 L650.0 634.5 L656.0 636.6 L662.0 638.8 L668.0 640.8 L674.0 642.8 L680.0 644.8 L686.0 646.7 L692.0 648.6 L698.0 650.4 L704.0 652.1 L710.0 653.8 L716.0 655.5 L722.0 657.1 L728.0 658.7 L734.0 660.2 L740.0 661.7 L746.0 663.2 L752.0 664.6 L758.0 666.0 L764.0 667.3 L770.0 668.6 L776.0 669.9 L782.0 671.2 L788.0 672.4 L794.0 673.6 L800.0 674.7 L806.0 675.8 L812.0 676.9 L818.0 678.0 L824.0 679.1 L830.0 680.1 L836.0 681.1 L842.0 682.1 L848.0 683.1 L854.0 684.0 L860.0 685.0 L866.0 685.9 L872.0 686.8 L878.0 687.7 L884.0 688.6 L890.0 689.5 L896.0 690.4 L902.0 691.2 L908.0 692.1 L914.0 692.9 L920.0 693.8 L926.0 694.6 L926.5 694.7 " fill="none" stroke="#847f70" stroke-width="4" stroke-linejoin="round"/>
 <path d="M925 695.5 L1065.5 594.5" fill="none" stroke="#737063" stroke-width="3.8"/>
</svg>


<!-- unsaved banner -->
<div class="a" style="left:437px;top:212px;width:390px;height:36px;background:#f0f0f0"></div>
<div class="a" style="left:751px;top:213px;width:2px;height:34px;background:#d4d4d4"></div>
<svg class="a" style="left:440px;top:216px" width="30" height="27" viewBox="0 0 30 27">
 <path d="M14.3 2 L27 24.5 H1.6 Z" fill="#f7a21c" stroke="#f7a21c" stroke-width="1.2" stroke-linejoin="round"/>
 <rect x="13" y="8.5" width="2.7" height="8.5" fill="#fff"/>
 <rect x="13" y="19" width="2.7" height="2.7" fill="#fff"/>
</svg>
<div class="a t" style="left:474.5px;top:221px;font-size:16.5px;font-weight:bold;color:#3d3d3d">Unsaved:</div>
<div class="a t" style="left:579.5px;top:221px;font-size:16px;color:#3d3d3d">Changes may be lost</div>
<div class="a t" style="left:772px;top:221px;font-size:16px;color:#2a8ad5">Save</div>

<!-- browser panel top -->
<div class="a" style="left:-2px;top:212px;width:130px;height:37px;background:#f1f1f1;border:1px solid #c5c5c5"></div>
<svg class="a" style="left:90px;top:218px" width="40" height="26" viewBox="90 218 40 26">
 <circle cx="103" cy="230.7" r="7" fill="#333"/>
 <rect x="98.5" y="229.7" width="9" height="2" fill="#f1f1f1"/>
 <path d="M121 222.5 V239 M124.2 225.5 V236" stroke="#888" stroke-width="1.5"/>
</svg>
<!-- small left box -->
<div class="a" style="left:0;top:400px;width:17px;height:31px;background:#f1f1f1"></div>
<svg class="a" style="left:0;top:400px" width="17" height="31" viewBox="0 400 17 31">
 <circle cx="-2" cy="416.5" r="6.5" fill="none" stroke="#444" stroke-width="1.6"/>
</svg>
<!-- browser panel bottom -->
<div class="a" style="left:-2px;top:901px;width:130px;height:39px;background:#f1f1f1;border:1px solid #c5c5c5"></div>
<svg class="a" style="left:90px;top:905px" width="40" height="30" viewBox="90 905 40 30">
 <circle cx="103.3" cy="920.5" r="7" fill="#333"/>
 <path d="M99 920.5 H107.6 M103.3 916.2 V924.8" stroke="#f1f1f1" stroke-width="2.2"/>
 <path d="M121 912 V929 M124.2 914.5 V926.5" stroke="#888" stroke-width="1.5"/>
</svg>


<!-- nav bar -->
<div class="a" style="left:454px;top:903px;width:356px;height:36px;background:#f0f0f0"></div>
<div class="a" style="left:454px;top:903px;width:49.5px;height:36px;background:#0c95dc"></div>
<svg class="a" style="left:450px;top:898px" width="365" height="45" viewBox="450 898 365 45">
 <defs>
  <radialGradient id="gLens" cx="0.4" cy="0.35" r="0.7"><stop offset="0" stop-color="#ffffff"/><stop offset="1" stop-color="#c8dede"/></radialGradient>
 </defs>
 <!-- orbit -->
 <path d="M471 924.5 Q459 924 460 920.5 Q462 917 471 916.8 Q482 917 482.5 920.5 Q482 924 476 924.5" fill="none" stroke="#444" stroke-width="3"/>
 <path d="M471 924.5 Q459 924 460 920.5 Q462 917 471 916.8 Q482 917 482.5 920.5 Q482 924 476 924.5" fill="none" stroke="#eee" stroke-width="1.4"/>
 <rect x="469" y="912.5" width="4" height="20" fill="#eee" stroke="#333" stroke-width="1"/>
 <path d="M471 908.5 L475.5 914 H466.5 Z" fill="#eee" stroke="#333" stroke-width="1"/>
 <path d="M461.5 926.5 L467 922.5 V930.5 Z" fill="#222"/>
 <path d="M465 926.5 H471" stroke="#222" stroke-width="1.6"/>
 <path d="M490.3 918.2 H498.9 L494.6 923.8 Z" fill="#fff"/>
 <!-- look at -->
 <rect x="509" y="914.5" width="22.5" height="17.5" rx="1.5" fill="#f6f6f6" stroke="#555" stroke-width="1.5"/>
 <rect x="513" y="920" width="14.5" height="6.5" fill="#a8b0bc" stroke="#444" stroke-width="1.3"/>
 <path d="M511 914 L515 909.5 V913 L521 911.5 V913 L526.5 910.5 L527 914" fill="#dcdcdc" stroke="#666" stroke-width="1"/>
 <!-- hand -->
 <path d="M552 931.5 Q549 927 547.5 922.5 Q547 920.5 549 920.8 L553 924 V913.5 Q553 911.5 555 911.8 Q556.5 912 556.5 914 V911 Q556.5 909.2 558.5 909.3 Q560.2 909.5 560.2 911.3 V912 Q560.5 910.2 562.3 910.5 Q564 910.8 564 912.5 V915 Q564.5 913.5 566.2 913.8 Q568 914.2 567.8 916 L567 926 Q566 931 562.5 932.5 Z" fill="#f3f3f3" stroke="#555" stroke-width="1.3"/>
 <path d="M556.5 914 V921 M560.2 912 V921 M564 915 V921" stroke="#555" stroke-width="1"/>
 <!-- zoom +- -->
 <circle cx="592.4" cy="918.8" r="6.3" fill="url(#gLens)" stroke="#444" stroke-width="1.8"/>
 <path d="M597 923.5 L604.5 930.5" stroke="#333" stroke-width="3.2" stroke-linecap="round"/>
 <path d="M602.5 913.5 H610.5 M606.5 909.8 V916.8 M602.5 918.8 H610.5" stroke="#333" stroke-width="1.4"/>
 <!-- zoom window -->
 <rect x="625.8" y="909.8" width="22.5" height="22.3" fill="none" stroke="#444" stroke-width="1" stroke-dasharray="2.5 2"/>
 <circle cx="635.5" cy="918.5" r="8.2" fill="url(#gLens)" stroke="#333" stroke-width="1.8"/>
 <path d="M641.5 924.5 L647.5 930.5" stroke="#333" stroke-width="3.2" stroke-linecap="round"/>
 <path d="M657 918 H665.5 L661.2 923.5 Z" fill="#222"/>
 <!-- display -->
 <rect x="675.8" y="909.3" width="22.8" height="19" rx="2" fill="#e4e4e4" stroke="#555" stroke-width="1.2"/>
 <rect x="678.6" y="912" width="17.2" height="13" rx="1" fill="#93b5e2" stroke="#3b5c99" stroke-width="1.4"/>
 <path d="M682 928.5 H692 L693.5 932 H680.5 Z" fill="#e8e8e8" stroke="#555" stroke-width="1"/>
 <path d="M702.6 918 H711 L706.8 923.5 Z" fill="#222"/>
 <!-- grid -->
 <defs><linearGradient id="gGrid" x1="0" y1="0" x2="0" y2="1"><stop offset="0" stop-color="#d6d6d6"/><stop offset="1" stop-color="#606a80"/></linearGradient></defs>
 <rect x="721.5" y="909.5" width="23" height="23" rx="1.5" fill="url(#gGrid)" stroke="#555" stroke-width="1.2"/>
 <g fill="#fafafa" opacity="0.95">
  <rect x="723.5" y="911.5" width="3" height="3"/><rect x="728" y="911.5" width="3" height="3"/><rect x="732.5" y="911.5" width="3" height="3"/><rect x="737" y="911.5" width="3" height="3"/><rect x="741" y="911.5" width="2.5" height="3"/>
  <rect x="723.5" y="916" width="3" height="3"/><rect x="728" y="916" width="3" height="3"/><rect x="732.5" y="916" width="3" height="3"/><rect x="737" y="916" width="3" height="3"/><rect x="741" y="916" width="2.5" height="3"/>
 </g>
 <g fill="#eaeaea" opacity="0.8">
  <rect x="723.5" y="920.5" width="3" height="3"/><rect x="728" y="920.5" width="3" height="3"/><rect x="732.5" y="920.5" width="3" height="3"/><rect x="737" y="920.5" width="3" height="3"/><rect x="741" y="920.5" width="2.5" height="3"/>
  <rect x="723.5" y="925" width="3" height="3"/><rect x="728" y="925" width="3" height="3"/><rect x="732.5" y="925" width="3" height="3"/><rect x="737" y="925" width="3" height="3"/><rect x="741" y="925" width="2.5" height="3"/>
 </g>
 <path d="M748.9 918 H757.3 L753.1 923.5 Z" fill="#222"/>
 <!-- viewports -->
 <rect x="768.5" y="911" width="10.5" height="9" rx="1.5" fill="#7ea3d9" stroke="#4867a6" stroke-width="1.2"/>
 <rect x="780" y="911" width="10.5" height="9" rx="1.5" fill="#7ea3d9" stroke="#4867a6" stroke-width="1.2"/>
 <rect x="768.5" y="921" width="10.5" height="9" rx="1.5" fill="#7ea3d9" stroke="#4867a6" stroke-width="1.2"/>
 <rect x="780" y="921" width="10.5" height="9" rx="1.5" fill="#7ea3d9" stroke="#4867a6" stroke-width="1.2"/>
 <path d="M795.2 918 H804 L799.6 923.5 Z" fill="#222"/>
</svg>


<!-- timeline -->
<svg class="a" style="left:0;top:948px" width="300" height="72" viewBox="0 948 300 72">
 <defs>
  <g id="sk">
   <path d="M3.5 0 H16 M0 3.5 V16 M3.5 19.5 H10 M19.5 3.5 V8.5" fill="none" stroke="#666" stroke-width="1.5"/>
   <rect x="-1.5" y="-1.5" width="3" height="3" fill="#1787e8"/>
   <rect x="18" y="-1.5" width="3" height="3" fill="#1787e8"/>
   <rect x="-1.5" y="18" width="3" height="3" fill="#1787e8"/>
   <path d="M12.2 19.6 L19.6 12.3 L22.3 15 L14.9 22.3 Z" fill="#f7c046"/>
   <path d="M19.6 12.3 L20.6 11.3 Q22.8 11 23.3 13.5 L22.3 15 Z" fill="#e83040"/>
   <path d="M12.2 19.6 L14.9 22.3 L11 23.5 Z" fill="#666"/>
  </g>
 </defs>
 <rect x="0" y="1008" width="264" height="2.2" fill="#cbcbcb"/>
 <g fill="#cbcbcb">
  <rect x="9.8" y="1000.4" width="2" height="8"/><rect x="45.7" y="1000.4" width="2" height="8"/><rect x="81.9" y="1000.4" width="2" height="8"/><rect x="117.8" y="1000.4" width="2" height="8"/>
  <rect x="153.8" y="1000.4" width="2" height="8"/><rect x="189.6" y="1000.4" width="2" height="8"/><rect x="226" y="1000.4" width="2" height="8"/><rect x="261.8" y="1000.4" width="2" height="8"/>
 </g>
 <!-- icon 1 partial -->
 <path d="M-2 983 H7 V995 H-2 Z" fill="#dcdcdc" stroke="#666" stroke-width="1.4"/>
 <path d="M11.9 971 L23 982.5 L11.9 994 L0.8 982.5 Z" fill="#e0965c" stroke="#d98a4e" stroke-width="1"/>
 <path d="M9 988 L15.5 979" stroke="#4cc060" stroke-width="2" stroke-dasharray="2 1.5"/>
 <path d="M7.5 982 Q11 978 14 981" stroke="#f5f5f5" stroke-width="1.5" fill="none"/>
 <!-- sketches -->
 <use href="#sk" x="36.5" y="972.8"/>
 <use href="#sk" x="108.2" y="972.8"/>
 <use href="#sk" x="216.5" y="972.4"/>
 <use href="#sk" x="252.3" y="972.4"/>
 <!-- sweep icon -->
 <path d="M70.8 971.2 H95 V989 L88 992 Q83 985 77.5 992 L70.8 989 Z" fill="#5aa7de"/>
 <path d="M72 971.5 H94 L86 983 H80 Z" fill="#8ccbf5"/>
 <circle cx="82.9" cy="989.4" r="5.6" fill="#f4f4f4" stroke="#666" stroke-width="1.5"/>
 <!-- extrude -->
 <path d="M146 971.7 H167 V979.5 L164 982.8 H143.1 V974.6 Z" fill="#67afe6"/>
 <path d="M146 971.7 H167 L164 974.6 H143.1 Z" fill="#8fcaf4"/>
 <path d="M143 986.5 H164 L167 983.5" fill="none" stroke="#2e95e8" stroke-width="1.6"/>
 <path d="M144.5 988 H164.5 L167 985.5 V992.5 L164.5 995 H144.5 Z" fill="#d9d9d9" stroke="#666" stroke-width="1.4"/>
 <!-- shell -->
 <path d="M179.8 976.5 L184.5 972 H202.5 V990 L198 994.6 H179.8 Z" fill="#f4f4f4" stroke="#666" stroke-width="1.4"/>
 <path d="M198 976.5 L202.5 972 V990 L198 994.6 Z" fill="#d0d0d0"/>
 <path d="M182.5 980 H186 V988 H194.5 V991.5 H182.5 Z" fill="#5aa7de"/>
 <path d="M186 980 H188.5 V986 H194.5 V988 H186 Z" fill="#3b8fd0"/>
 <!-- marker -->
 <path d="M271.9 962.4 H290 V968.5 L283 975.4 H278.5 L271.9 968.5 Z" fill="#666"/>
 <rect x="279.3" y="970" width="3" height="40.6" fill="#666"/>
</svg>
<div class="a" style="left:0;top:1050px;width:2px;height:10px;background:#2a8be0"></div>


<!-- taskbar -->
<div class="a" style="left:709px;top:1020px;width:73px;height:60px;background:#53534a"></div>
<div class="a" style="left:490px;top:1077px;width:61px;height:3px;background:#7ab6e6"></div>
<div class="a" style="left:640px;top:1077px;width:61px;height:3px;background:#7ab6e6"></div>
<div class="a" style="left:709px;top:1077px;width:73px;height:3px;background:#7ab6e6"></div>
<svg class="a" style="left:260px;top:1020px" width="1036" height="60" viewBox="260 1020 1036 60">
 <defs>
  <linearGradient id="gF" x1="0" y1="0" x2="1" y2="1"><stop offset="0" stop-color="#f6a445"/><stop offset="1" stop-color="#d9761c"/></linearGradient>
 </defs>
 <circle cx="295.9" cy="1049.7" r="10.2" fill="none" stroke="#fff" stroke-width="2.7"/>
 <!-- task view -->
 <g fill="none" stroke="#fff" stroke-width="1.3">
  <rect x="356.6" y="1044.5" width="15" height="9.6"/>
  <path d="M356.6 1038 V1041 H371.6 V1038 M356.6 1061 V1058 H371.6 V1061 M378.8 1038 V1061"/>
 </g>
 <rect x="377" y="1044.6" width="3.6" height="3.6" fill="#fff"/>
 <!-- gear -->
 <g transform="translate(444.4 1049.7)" fill="#fff">
  <circle r="10.3"/>
  <g id="tgt"><rect x="-2.9" y="-13.6" width="5.8" height="5"/></g>
  <use href="#tgt" transform="rotate(45)"/><use href="#tgt" transform="rotate(90)"/><use href="#tgt" transform="rotate(135)"/>
  <use href="#tgt" transform="rotate(180)"/><use href="#tgt" transform="rotate(225)"/><use href="#tgt" transform="rotate(270)"/><use href="#tgt" transform="rotate(315)"/>
  <circle r="5.6" fill="#2e2d24"/>
 </g>
 <!-- explorer -->
 <path d="M504 1039 Q504 1037 506 1037 H513 L516 1040 H534 Q535.8 1040 535.8 1042 V1060.5 Q535.8 1062.5 533.8 1062.5 H506 Q504 1062.5 504 1060.5 Z" fill="#f6d06a"/>
 <path d="M504 1039 Q504 1037 506 1037 H513 L516 1040 V1043 H504 Z" fill="#e3a92a"/>
 <rect x="504" y="1043" width="31.8" height="2" fill="#fbe39b"/>
 <path d="M509.7 1062.8 V1051 H530.5 V1062.8 H525.5 V1056 H514.7 V1062.8 Z" fill="#3b97de"/>
 <!-- rar -->
 <rect x="576.8" y="1032" width="35.9" height="35.8" fill="#4aa3ee"/>
 <path d="M587 1035 H607.5 V1064.5 H581.5 V1041 Z" fill="#fff"/>
 <text x="594.5" y="1062" font-family="Liberation Sans" font-weight="bold" font-size="10.5" fill="#3d8fe0" text-anchor="middle">RAR</text>
 <!-- chrome -->
 <path d="M669.4 1049.3 L655.37 1041.2 A16.2 16.2 0 0 1 683.43 1041.2 Z" fill="#db4437"/>
 <path d="M669.4 1049.3 L683.43 1041.2 A16.2 16.2 0 0 1 669.4 1065.5 Z" fill="#f4b400"/>
 <path d="M669.4 1049.3 L669.4 1065.5 A16.2 16.2 0 0 1 655.37 1041.2 Z" fill="#0f9d58"/>
 <circle cx="669.4" cy="1049.3" r="7.6" fill="#fff"/>
 <circle cx="669.4" cy="1049.3" r="6" fill="#4285f4"/>
 <circle cx="678.7" cy="1058.6" r="12" fill="#c2185b"/>
 <text x="678.7" y="1064" font-family="Liberation Sans" font-size="14.5" font-weight="bold" fill="#f0c0d4" text-anchor="middle">K</text>
 <!-- fusion -->
 <rect x="726.6" y="1032" width="36.5" height="35.8" fill="#fbe3d0"/>
 <path d="M726.6 1054 Q745 1049 763.1 1056 V1067.8 H726.6 Z" fill="#fdf0e6" opacity="0.8"/>
 <path d="M738 1036 L754 1037 L753 1043 L745.5 1043 L745.5 1046.5 L752.5 1046.5 L751.5 1051.5 L745.5 1051.5 L745 1058.5 L738.5 1060 Z" fill="url(#gF)"/>
 <path d="M738 1036 L741.5 1038.5 L741 1059.3 L738.5 1060 Z" fill="#c2651a" opacity="0.55"/>
 <text x="746.5" y="1064.5" font-family="Liberation Sans" font-weight="bold" font-size="7.5" fill="#f08a2a">360</text>
 <!-- weather -->
 <g>
  <circle cx="1033" cy="1048" r="8.5" fill="#cfe6f7"/>
  <circle cx="1043" cy="1051.5" r="8" fill="#b5daf3"/>
  <circle cx="1027" cy="1053.5" r="5.2" fill="#dcefff"/>
  <rect x="1027" y="1050" width="18" height="9" rx="3" fill="#c5e2f6"/>
  <path d="M1038 1053 Q1041 1057.5 1041 1059 A3 3 0 0 1 1035 1059 Q1035 1057.5 1038 1053 Z" fill="#2f8fd8"/>
 </g>
 <path d="M1263.5 1053.5 L1272.2 1044.8 L1280.9 1053.5" fill="none" stroke="#fff" stroke-width="1.4"/>
</svg>
<div class="a t" style="left:1070px;top:1042.6px;font-size:20.5px;color:#fff;transform:scaleX(0.93);transform-origin:0 0">16°C</div>
<div class="a t" style="left:1125.5px;top:1042.6px;font-size:20.5px;color:#fff">Rain to stop</div>

<!-- viewport placeholder -->
</body></html>
